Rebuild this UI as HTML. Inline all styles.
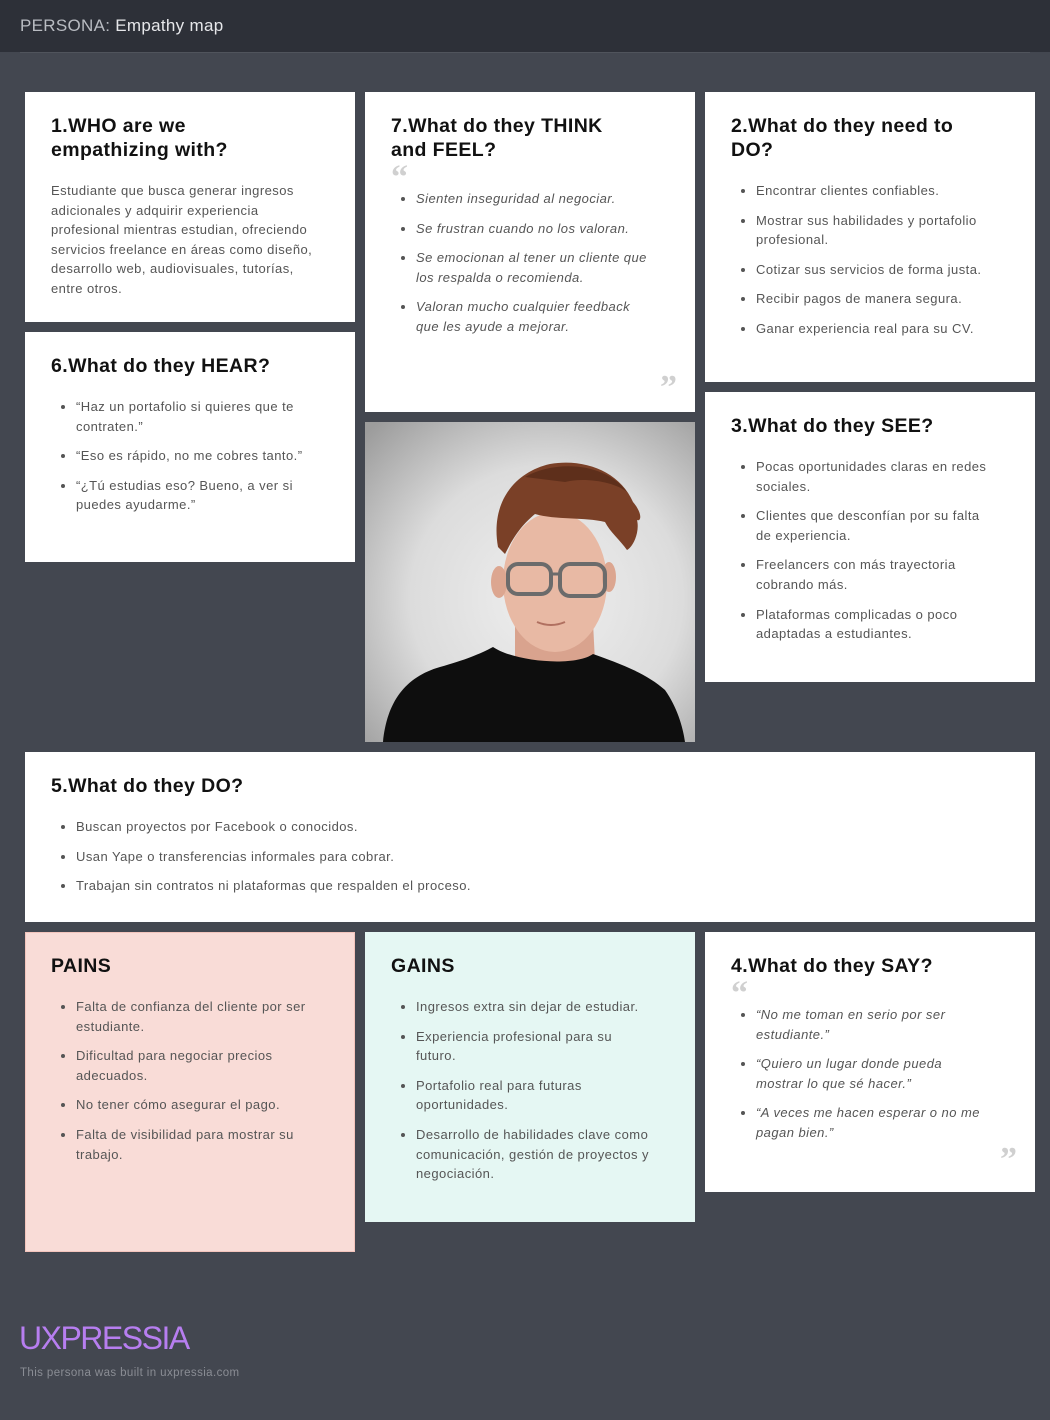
<!DOCTYPE html>
<html><head><meta charset="utf-8"><style>
*{margin:0;padding:0;box-sizing:border-box}
body{width:1050px;height:1420px;background:#434750;font-family:"Liberation Sans",sans-serif;position:relative;overflow:hidden}
.hdr{position:absolute;left:0;top:0;width:1050px;height:52px;background:#2d3038;color:#e6e7ea;font-size:17px;line-height:52px;padding-left:20px;letter-spacing:.3px}
.hdr span{color:#b9bcc2}
.hline{position:absolute;left:20px;top:52px;width:1010px;height:1px;background:#50545c}
.c{position:absolute;background:#fff;padding:22px 26px 0 26px;color:#555}
.c h2{font-size:19.5px;line-height:24px;color:#111;font-weight:bold;margin-bottom:19px;letter-spacing:.4px}
.c p{font-size:13px;line-height:19.6px;letter-spacing:.45px;white-space:nowrap}
.c ul{padding-left:25px;font-size:13px;line-height:19.6px;letter-spacing:.45px;white-space:nowrap}
.c li{margin-bottom:10px}
.c.i li{font-style:italic}
.q1{color:#d0d0d0;font-size:34px;font-family:"Liberation Serif",serif;font-weight:bold;line-height:18px;height:14px;margin-top:-12px;margin-bottom:6px}
.q2{position:absolute;right:18px;color:#d0d0d0;font-size:34px;font-family:"Liberation Serif",serif;font-weight:bold;line-height:20px}
</style></head><body>
<div class="hdr"><span>PERSONA:</span> Empathy map</div>
<div class="hline"></div>

<div class="c" style="left:25px;top:92px;width:330px;height:230px">
<h2>1.WHO are we<br>empathizing with?</h2>
<p>Estudiante que busca generar ingresos<br>adicionales y adquirir experiencia<br>profesional mientras estudian, ofreciendo<br>servicios freelance en áreas como diseño,<br>desarrollo web, audiovisuales, tutorías,<br>entre otros.</p>
</div>

<div class="c" style="left:25px;top:332px;width:330px;height:230px">
<h2>6.What do they HEAR?</h2>
<ul><li>“Haz un portafolio si quieres que te<br>contraten.”</li><li>“Eso es rápido, no me cobres tanto.”</li><li>“¿Tú estudias eso? Bueno, a ver si<br>puedes ayudarme.”</li></ul>
</div>

<div class="c i" style="left:365px;top:92px;width:330px;height:320px">
<h2>7.What do they THINK<br>and FEEL?</h2>
<div class="q1">“</div>
<ul><li>Sienten inseguridad al negociar.</li><li>Se frustran cuando no los valoran.</li><li>Se emocionan al tener un cliente que<br>los respalda o recomienda.</li><li>Valoran mucho cualquier feedback<br>que les ayude a mejorar.</li></ul>
<div class="q2" style="top:286px">”</div>
</div>

<svg style="position:absolute;left:365px;top:422px" width="330" height="320" viewBox="0 0 330 320">
<defs><radialGradient id="bg" cx="0.55" cy="0.55" r="0.75"><stop offset="0" stop-color="#efefef"/><stop offset="0.55" stop-color="#dcdcdc"/><stop offset="1" stop-color="#9c9c9c"/></radialGradient></defs>
<rect width="330" height="320" fill="url(#bg)"/>
<path d="M150 200 L150 240 L230 240 L228 200 Z" fill="#d9a38e"/>
<ellipse cx="190" cy="160" rx="52" ry="70" fill="#e8b9a4"/>
<ellipse cx="134" cy="160" rx="8" ry="16" fill="#dca690"/>
<ellipse cx="244" cy="155" rx="7" ry="15" fill="#dca690"/>
<path d="M133 125 C125 80 150 50 185 42 C220 36 255 50 268 80 C278 92 276 100 272 98 C275 110 268 125 262 128 C255 118 245 110 240 100 C220 95 190 98 170 92 C158 102 150 112 140 132 Z" fill="#7a4027"/>
<path d="M160 55 C190 38 240 40 262 70 C250 60 220 55 200 60 Z" fill="#5e2f1b"/>
<rect x="143" y="142" width="43" height="30" rx="10" fill="none" stroke="#6b6b6b" stroke-width="4"/>
<rect x="195" y="142" width="45" height="32" rx="10" fill="none" stroke="#6b6b6b" stroke-width="4"/>
<path d="M186 152 L195 152" stroke="#6b6b6b" stroke-width="3"/>
<path d="M172 200 Q186 206 200 200" stroke="#b07060" stroke-width="2" fill="none"/>
<path d="M18 320 C22 280 40 255 75 245 C100 238 115 232 128 225 C150 240 210 245 228 232 C250 240 280 250 300 268 C312 285 318 305 320 320 Z" fill="#0e0e0e"/>
</svg>

<div class="c" style="left:705px;top:92px;width:330px;height:290px">
<h2>2.What do they need to<br>DO?</h2>
<ul><li>Encontrar clientes confiables.</li><li>Mostrar sus habilidades y portafolio<br>profesional.</li><li>Cotizar sus servicios de forma justa.</li><li>Recibir pagos de manera segura.</li><li>Ganar experiencia real para su CV.</li></ul>
</div>

<div class="c" style="left:705px;top:392px;width:330px;height:290px">
<h2>3.What do they SEE?</h2>
<ul><li>Pocas oportunidades claras en redes<br>sociales.</li><li>Clientes que desconfían por su falta<br>de experiencia.</li><li>Freelancers con más trayectoria<br>cobrando más.</li><li>Plataformas complicadas o poco<br>adaptadas a estudiantes.</li></ul>
</div>

<div class="c" style="left:25px;top:752px;width:1010px;height:170px">
<h2>5.What do they DO?</h2>
<ul><li>Buscan proyectos por Facebook o conocidos.</li><li>Usan Yape o transferencias informales para cobrar.</li><li>Trabajan sin contratos ni plataformas que respalden el proceso.</li></ul>
</div>

<div class="c" style="left:25px;top:932px;width:330px;height:320px;background:#f9dcd7;border:1px solid #f3c4bc;padding-left:25px;padding-top:21px">
<h2>PAINS</h2>
<ul><li>Falta de confianza del cliente por ser<br>estudiante.</li><li>Dificultad para negociar precios<br>adecuados.</li><li>No tener cómo asegurar el pago.</li><li>Falta de visibilidad para mostrar su<br>trabajo.</li></ul>
</div>

<div class="c" style="left:365px;top:932px;width:330px;height:290px;background:#e5f7f3">
<h2>GAINS</h2>
<ul><li>Ingresos extra sin dejar de estudiar.</li><li>Experiencia profesional para su<br>futuro.</li><li>Portafolio real para futuras<br>oportunidades.</li><li>Desarrollo de habilidades clave como<br>comunicación, gestión de proyectos y<br>negociación.</li></ul>
</div>

<div class="c i" style="left:705px;top:932px;width:330px;height:260px">
<h2>4.What do they SAY?</h2>
<div class="q1">“</div>
<ul><li>“No me toman en serio por ser<br>estudiante.”</li><li>“Quiero un lugar donde pueda<br>mostrar lo que sé hacer.”</li><li>“A veces me hacen esperar o no me<br>pagan bien.”</li></ul>
<div class="q2" style="top:218px">”</div>
</div>

<div style="position:absolute;left:19px;top:1318px;color:#b77ef0;font-size:32px;letter-spacing:-1.5px;line-height:40px">UXPRESSIA</div>
<div style="position:absolute;left:20px;top:1367px;color:#8a8d94;font-size:11.5px;letter-spacing:.4px">This persona was built in uxpressia.com</div>
</body></html>
